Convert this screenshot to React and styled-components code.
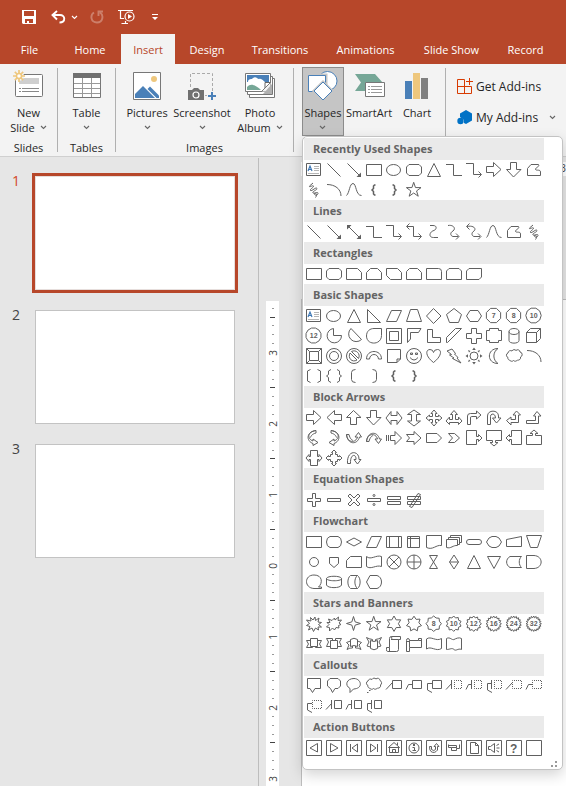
import React from "react";
import styled, { createGlobalStyle, css } from "styled-components";

const brand = "#b7472a";
const ink = "#262626";
const stroke = "#606060";
const blue = "#4a80b8";
const sand = "#eec77d";
const teal = "#76a797";

const GlobalStyle = createGlobalStyle`
  * { box-sizing: border-box; }
  body {
    margin: 0;
    font-family: "Open Sans", "Noto Sans", sans-serif;
    font-size: 12px;
    color: ${ink};
  }
  button { font: inherit; color: inherit; background: none; border: 0; padding: 0; margin: 0; }
  svg { display: block; flex: none; }
`;

/* ---------- page frame ---------- */

const Page = styled.div`
  height: 100vh;
  display: flex;
  flex-direction: column;
  overflow: hidden;
  background: #e6e6e6;
`;

const TitleBar = styled.header`
  flex: none;
  height: 34px;
  padding: 0 20px;
  display: flex;
  align-items: center;
  background: ${brand};
  color: #fff;
`;

const QuickButton = styled.button`
  width: ${(p) => p.$width}px;
  height: 34px;
  display: flex;
  align-items: center;
  justify-content: center;
  margin-right: ${(p) => p.$gap || 0}px;
  opacity: ${(p) => (p.disabled ? 0.3 : 1)};
  color: #fff;
`;

const TabBar = styled.nav`
  flex: none;
  height: 30px;
  display: flex;
  background: ${brand};
`;

const Tab = styled.button`
  flex: none;
  width: ${(p) => p.$width}px;
  height: 30px;
  white-space: nowrap;
  text-align: center;
  font-size: 11px;
  color: #fff;
  ${(p) =>
    p.$active &&
    css`
      background: #f3f3f3;
      color: ${brand};
    `}
`;

/* ---------- ribbon ---------- */

const Ribbon = styled.div`
  flex: none;
  height: 93px;
  display: flex;
  background: #f3f3f3;
  border-bottom: 1px solid #d0d0d0;
  z-index: 2;
`;

const Group = styled.section`
  flex: none;
  width: ${(p) => p.$width}px;
  padding-top: 3px;
  display: flex;
  flex-direction: column;
`;

const GroupButtons = styled.div`
  display: flex;
  justify-content: ${(p) => p.$align || "center"};
  padding-left: ${(p) => p.$indent || 0}px;
  height: 69px;
`;

const GroupName = styled.div`
  margin-top: 4px;
  line-height: 15px;
  font-size: 11px;
  text-align: center;
`;

const Separator = styled.div`
  flex: none;
  width: 1px;
  margin: 4px 0;
  background: #b0b0b0;
`;

const BigButton = styled.button`
  flex: none;
  width: ${(p) => p.$width}px;
  height: 69px;
  padding-top: 2px;
  border: 1px solid transparent;
  display: flex;
  flex-direction: column;
  align-items: center;
  gap: 3px;
  ${(p) =>
    p.$open &&
    css`
      background: #c5c5c5;
      border-color: #8c8c8c;
    `}
`;

const BigLabel = styled.span`
  display: flex;
  flex-direction: column;
  align-items: center;
  line-height: 15px;
  font-size: 11px;
  white-space: nowrap;
`;

const LabelLine = styled.span`
  display: flex;
  align-items: center;
  gap: 5px;
  height: 15px;
`;

const MenuAnchor = styled.div`
  position: relative;
`;

const AddIns = styled.section`
  flex: 1;
  min-width: 0;
  padding: 7px 10px;
`;

const AddInButton = styled.button`
  width: 100%;
  height: 31px;
  display: flex;
  align-items: center;
  gap: 3px;
  white-space: nowrap;
  font-size: 12px;
`;

const Push = styled.span`
  margin-left: auto;
`;

/* ---------- shapes menu ---------- */

const ShapesMenu = styled.div`
  position: absolute;
  left: 0;
  top: 100%;
  width: 261px;
  padding: 1px;
  background: #fff;
  border: 1px solid #c3c3c3;
  border-radius: 5px;
  box-shadow: 0 5px 14px rgba(0, 0, 0, 0.17);
  overflow: hidden;
`;

const Category = styled.h2`
  width: 240px;
  height: 22px;
  margin: 0;
  padding-left: 9px;
  background: #eaeaea;
  color: #646464;
  font-size: 11px;
  line-height: 21px;
  font-weight: 700;
`;

const ShapeGrid = styled.div`
  display: grid;
  grid-template-columns: repeat(12, 20px);
  grid-auto-rows: 20px;
`;

const ShapeButton = styled.button`
  width: 20px;
  height: 20px;
`;

const Footer = styled.div`
  height: 10px;
  display: flex;
  justify-content: flex-end;
  align-items: flex-end;
  padding-right: 3px;
`;

/* ---------- workspace ---------- */

const Workspace = styled.main`
  flex: 1;
  min-height: 0;
  display: flex;
`;

const SlideList = styled.ol`
  flex: none;
  width: 259px;
  margin: 1px 0 0;
  padding: 18px 23px 0 12px;
  list-style: none;
  border-right: 1px solid #bdbdbd;
  display: flex;
  flex-direction: column;
  gap: 20px;
`;

const SlideItem = styled.li`
  display: flex;
  align-items: flex-start;
  color: ${(p) => (p.$selected ? "#d24726" : "#444")};
`;

const SlideNumber = styled.span`
  width: 23px;
  font-size: 14px;
  line-height: 10px;
`;

const Thumb = styled.button`
  flex: 1;
  height: 114px;
  background: #fff;
  border: 1px solid ${(p) => (p.$selected ? "#e6dedc" : "#c3c3c3")};
  box-shadow: ${(p) => (p.$selected ? `0 0 0 3px ${brand}` : "none")};
`;

const Ruler = styled.div`
  flex: none;
  width: 13px;
  margin: 144px 0 0 7px;
  padding-top: 3px;
  background: #fff;
  overflow: hidden;
`;

const RulerUnit = styled.div`
  height: ${(p) => p.$height}px;
  display: flex;
  flex-direction: column;
`;

const Mark = styled.div`
  flex: 1;
  min-height: 0;
  display: flex;
  align-items: center;
  justify-content: center;
`;

const Tick = styled.i`
  height: 1px;
  width: ${(p) => (p.$major ? 5 : 2)}px;
  background: ${(p) => (p.$major ? "#444" : "#999")};
`;

const RulerDigit = styled.span`
  writing-mode: vertical-rl;
  transform: rotate(180deg);
  font-size: 10px;
  line-height: 12px;
  color: #444;
`;

const Editor = styled.div`
  flex: 1;
  min-width: 0;
  padding: 5px 0 0 22px;
  display: flex;
  flex-direction: column;
`;

const TopRuler = styled.div`
  height: 14px;
  margin-bottom: 123px;
  background: #fff;
  font-size: 10px;
  line-height: 13px;
  text-align: right;
  color: #444;
`;

const Canvas = styled.div`
  flex: 1;
  background: #fff;
  border: solid #bdbdbd;
  border-width: 1px 0 0 1px;
`;

/* ---------- shape drawings, each on a 20 x 20 cell ---------- */

const radial = (n, R, r, cx = 9.7, cy = 9.7, turn = -90) => {
  const count = r ? n * 2 : n;
  const pts = [];
  for (let i = 0; i < count; i++) {
    const rad = r && i % 2 ? r : R;
    const a = ((turn + (i * 360) / count) * Math.PI) / 180;
    pts.push(`${(cx + rad * Math.cos(a)).toFixed(2)} ${(cy + rad * Math.sin(a)).toFixed(2)}`);
  }
  return `M${pts.join("L")}Z`;
};
const circle = (r, cx = 9.5, cy = 9.5) =>
  `M${cx - r} ${cy}a${r} ${r} 0 1 0 ${2 * r} 0a${r} ${r} 0 1 0 ${-2 * r} 0Z`;
const oval = (rx, ry, cx = 9.5, cy = 9.5) =>
  `M${cx - rx} ${cy}a${rx} ${ry} 0 1 0 ${2 * rx} 0a${rx} ${ry} 0 1 0 ${-2 * rx} 0Z`;
const box = "M2.5 2.5H17.5V17.5H2.5Z";

const S = {
  textBox: {
    d: "M2.5 3.5H16.5V15.5H2.5Z",
    soft: "M10 6.5H15M10 8.5H15M10 10.5H15M4 13.5H15",
    accent: "M4 11L6 6L8 11M4.5 9.5H7.5",
  },
  line: { d: "M3.5 3.5L16.5 16.5" },
  arrow: { d: "M3.5 3.5L16.5 16.5", solid: "M17 12.5V17H12.5Z" },
  doubleArrow: { d: "M4 4L16 16", solid: "M17 12.5V17H12.5ZM3 7.5V3H7.5Z" },
  elbow: { d: "M2 4.5H9.5V15.5H18" },
  elbowArrow: { d: "M2 3.5H9.5V14.5H17M14.5 11.5L17.5 14.5L14.5 17.5" },
  elbowDouble: { d: "M3 4.5H9.5V14.5H17M14.5 11.5L17.5 14.5L14.5 17.5M5.5 1.5L2.5 4.5L5.5 7.5" },
  curved: { d: "M6 3.5H9C13.5 3.5 12.5 7.5 10 8.500C5.500 9.500 4 15.5 9.500 15.5H14" },
  curvedArrow: { d: "M4 3.5C10 2.500 12 7 9 9C5 11 7 15 10 14.500H14.500M12 11.5L15 14.5L12 17.5" },
  curvedDouble: { d: "M3 4.5C10 3 12.500 7 10 9C6.500 11 8 15 11 14.500H16M14 11.5L17 14.5L14 17.5M5.5 1.5L2.5 4.5L5.5 7.5" },
  curve: { d: "M2.5 15.5C5.5 13 5.5 3.5 9 3.5S11.5 15.5 17.5 15.5" },
  freeform: { d: "M3.5 15.5V8.5L7 4.5H14.5C16 7 11.5 7 11.5 9.5C12.5 11 16.5 9 16.5 12V15.5Z" },
  scribble: { d: "M9 3L5.500 6C5 8 8.500 5 9.500 6C10 7.500 5.500 9 6.500 10.500C8 11.500 12 6.500 13 8.500C13 10.500 8 11 9 13C10.500 14 14 11 14 13.500C13.500 16 10 15.500 10.500 13.500C11 12 14 14.500 11.500 17.500" },
  rect: { d: "M2.5 4.5H17.5V15.5H2.5Z" },
  ellipse: { d: oval(7, 5.5, 9.5, 10) },
  roundRect: { d: "M5 4.5H15L17.5 7V13L15 15.5H5L2.5 13V7Z" },
  triangle: { d: "M10 3.5L16.5 16.5H3.5Z" },
  rightArrow: { d: "M2.5 6.5H9.5V2.5L17 9.5L9.5 16.5V12.5H2.5Z" },
  leftArrow: { d: "M17.5 6.5H10.5V2.5L3 9.5L10.5 16.5V12.5H17.5Z" },
  downArrow: { d: "M6.5 2.5H12.5V9.5H17L9.5 17L2.5 9.5H6.5Z" },
  upArrow: { d: "M6.5 16.5H12.5V9.5H17L9.5 2.5L2.5 9.5H6.5Z" },
  arc: { d: "M3 4.5C11 4.5 17 9 17 16" },
  leftBrace: { d: "M11.5 5H10.5L9.5 6V8.5L8 10L9.5 11.5V14L10.5 15H11.5", w: 1.5 },
  rightBrace: { d: "M8.5 5H9.5L10.5 6V8.5L12 10L10.5 11.5V14L9.5 15H8.5", w: 1.5 },
  star5: { d: radial(5, 7.7, 3, 9.7, 10) },
  snip1: { d: "M2.5 4.5H13.5L17.5 8.5V15.5H2.5Z" },
  snip2: { d: "M6.5 4.5H13.5L17.5 8.5V15.5H2.5V8.5Z" },
  snipDiag: { d: "M2.5 4.5H13.5L17.5 8.5V15.5H6.5L2.5 11.5Z" },
  snipRound: { d: "M5.5 4.5H13.5L17.5 8.5V15.5H2.5V7.5Z" },
  round1: { d: "M2.5 4.5H14.5Q17.5 4.5 17.5 7.5V15.5H2.5Z" },
  round2: { d: "M5 4.5H15L17.5 7V15.5H2.5V7Z" },
  roundDiag: { d: "M5 4.5H17.5V13L15 15.5H2.5V7Z" },
  rightTriangle: { d: "M3.5 3.5V16.5H16.5Z" },
  parallelogram: { d: "M7.5 4.5H17.5L12.5 15.5H2.5Z" },
  trapezoid: { d: "M6.5 3.5H13.5L17.5 15.5H2.5Z" },
  diamond: { d: "M9.5 2.5L17 10L9.5 17.5L2.5 10Z" },
  pentagon: { d: "M10 2.5L17.5 8.5L14.5 16.5H5.5L2.5 8.5Z" },
  hexagon: { d: "M6 4.5H14L17.5 10L14 15.5H6L2.5 10Z" },
  n7: { d: radial(8, 7.7, 0, 9.5, 9.5, 22.5), t: "7" },
  n8: { d: radial(8, 7.7, 0, 9.5, 9.5, 22.5), t: "8" },
  n10: { d: radial(10, 7.7, 0, 9.5, 9.5, 0), t: "10" },
  n12: { d: radial(12, 7.7, 0, 9.5, 9.5, 15), t: "12" },
  pie: { d: "M9.5 2.5A7.2 7.2 0 1 0 17.5 9.5H9.5Z" },
  chord: { d: "M7 2.5A7.5 7.5 0 1 0 17.5 13.500Z" },
  teardrop: { d: "M17.5 2.5V9.5C17.5 19.5 2.5 19.5 2.5 10C2.5 5 6 2.5 10 2.5Z" },
  frame: { d: "M2.5 2.5H17.5V17.5H2.5ZM5.5 5.5H14.5V14.5H5.5Z" },
  halfFrame: { d: "M3.5 2.5H17L14.5 6.5H6.5V13L3.5 16.5Z" },
  lShape: { d: "M3.5 3.5H8.5V11.5H16.5V16.5H3.5Z" },
  stripe: { d: "M11.5 2.5H17.5L3.500 16.5H2.5V11.5Z" },
  cross: { d: "M7.5 2.5H12.5V7.5H17.5V12.5H12.5V17.5H7.5V12.5H2.5V7.5H7.5Z" },
  plaque: { d: "M5.5 2.5H14.5V4.5H17.5V14.5H14.5V16.5H5.5V14.5H2.5V4.5H5.5Z" },
  can: { d: "M5 5.5V14.5C5 18 15 18 15 14.5V5.5M5 5.5C5 1.5 15 1.5 15 5.5S5 9.5 5 5.5Z" },
  cube: { d: "M2.5 6.5H12.5V16.5H2.5ZM2.5 6.5L6.5 2.5H16.5L12.5 6.5M16.5 2.5V12.5L12.5 16.5" },
  bevel: { d: "M2.5 2.5H17.5V17.5H2.5ZM5.5 5.5H14.5V14.5H5.5ZM2.5 2.5L5.5 5.5M17.5 2.5L14.5 5.5M17.5 17.5L14.5 14.5M2.5 17.5L5.5 14.5" },
  donut: { d: circle(7.5, 10, 10) + circle(4.5, 10, 10) },
  no: { d: circle(7.5, 10, 10) + "M6 7L13 14C8 17 3.5 12 6 7ZM7.5 5.5L14.5 12.5C17 8 12 3 7.5 5.5Z" },
  blockArc: { d: "M2.5 13C2.5 3 17.5 3 17.5 13H14.5C14 7 6 7 5.5 13Z" },
  folded: { d: "M3.5 3.5H16.5V13L13 16.5H3.5ZM16.5 13H13V16.5" },
  smiley: { d: circle(7.5, 10, 10) + "M6 11.5Q10 16.5 14 11.5M6.5 7H8.5V8.5H6.5ZM11.5 7H13.5V8.5H11.5Z" },
  heart: { d: "M9.5 16.5C1 10 1.5 3.5 6 3.5Q9 3.5 9.5 6.5Q10 3.5 13.5 3.5C18 3.5 18 10 9.5 16.5Z" },
  lightning: { d: "M8 3L11.5 7.5L10.5 8L14 11.5L13 12L17 17L8.5 12.5L10 12L5.5 9L7.5 8.5L3 5Z" },
  sun: { d: circle(4, 10, 10), solid: "M10 1.5L11.8 4H8.2ZM10 18.5L8.2 16H11.8ZM1.5 10L4 8.2V11.8ZM18.5 10L16 11.8V8.2ZM4 4L6.5 5L5 6.5ZM16 4L15 6.5L13.5 5ZM4 16L5 13.5L6.5 15ZM16 16L13.5 15L15 13.5Z" },
  moon: { d: "M14 2.5C2.5 2.5 2.5 17.5 14 17.5C8.5 14 8.5 6 14 2.5Z" },
  cloud: { d: "M4 11.500A2.400 2.400 0 0 1 4 7A2.600 2.600 0 0 1 8 5A2.400 2.400 0 0 1 12 4.500A2.300 2.300 0 0 1 16 6A2.600 2.600 0 0 1 16.500 11A2.400 2.400 0 0 1 13.500 14A2.600 2.600 0 0 1 9.500 14.500A2.500 2.500 0 0 1 5.500 14A1.800 1.800 0 0 1 4 11.500Z" },
  brackets: { d: "M6.5 3.5L3.5 5V15L6.5 16.5M13.5 3.5L16.5 5V15L13.5 16.5" },
  braces: { d: "M7 3.5L4.5 5V8.5L2.5 10L4.5 11.5V15L7 16.5M13 3.5L15.5 5V8.5L17.5 10L15.5 11.5V15L13 16.5" },
  leftBracket: { d: "M11.5 3.5Q7.5 3.5 7.5 6.5V13.5Q7.5 16.5 11.5 16.5" },
  rightBracket: { d: "M8.5 3.5Q12.5 3.5 12.5 6.5V13.5Q12.5 16.5 8.5 16.5" },
  leftRight: { d: "M2 10L7 3.5V7.5H13V3.5L18 10L13 16.5V12.5H7V16.5Z" },
  upDown: { d: "M10 2L16.5 6.5H12.5V13H16.5L10 18L3.5 13H7.5V6.5H3.5Z" },
  quad: { d: "M10 2L13 5.5H11.5V8.5H14.5V7L18 10L14.5 13V11.5H11.5V14.5H13L10 18L7 14.5H8.5V11.5H5.5V13L2 10L5.5 7V8.5H8.5V5.5H7Z" },
  leftRightUp: { d: "M10 2.5L13.5 6.5H11.500V11.5H14.5V9L18 13L14.5 16.5V14.5H5.5V16.5L2 13L5.5 9V11.5H8.500V6.5H6.5Z" },
  bent: { d: "M3.5 16.5V8Q3.5 5.5 6.5 5.5H12.5V3L17 7L12.5 11V8.5H7.5Q6.5 8.5 6.5 10V16.5Z" },
  uTurn: { d: "M3.5 16.5V8C3.5 1.5 14.5 1.5 14.5 8V10H17L12.5 15L8.5 10H11.5C11.5 5 6.5 5 6.5 8.5V16.5Z" },
  leftUp: { d: "M12.5 3L16.5 7H14.5V14.5H7V17L2.5 12.5L7 9V11.5H11.5V7H9Z" },
  bentUp: { d: "M13 3.5L17 8H14.500V15.5H2.5V12.5H11.5V8H9.5Z" },
  curvedRight: { d: "M12 2.5C3 3.5 3 11 9 13V11L14 14.5L9 17.5V15.5C2 13 2 4 12 2.5ZM12 2.5V5C8 6 7 8 6.5 9.5" },
  curvedLeft: { d: "M7 2.5C16 3.5 16 11 10 13V11L5 14.5L10 17.5V15.5C17 13 17 4 7 2.5ZM7 2.5V5C11 6 12 8 12.5 9.5" },
  curvedUp: { d: "M2.5 6.5C3.5 15.5 12 15 13.5 9H11L14.5 4.5L17.5 9H15.5C13.5 17 3.5 17 2.5 6.5ZM2.5 6.5H5C6 11 8 12 9 12.5" },
  curvedDown: { d: "M2.5 13.5C3.5 4.5 12 5 13.5 11H11L14.5 15.5L17.5 11H15.5C13.5 3 3.5 3 2.5 13.5ZM2.5 13.5H5C6 9 8 8 9 7.5" },
  striped: { d: "M2.5 7V13M4.5 7V13M6.5 7.5H11V3.5L17.5 10L11 16.5V12.5H6.5Z" },
  notched: { d: "M2.5 6.5H10V3.5L17 10L10 16.5V13.5H2.5L5.5 10Z" },
  homePlate: { d: "M2.5 5.5H13L17.5 10L13 14.5H2.5Z" },
  chevron: { d: "M4.5 5.5H10.5L15.5 10L10.5 14.5H4.5L8.5 10Z" },
  rightCallout: { d: "M2.5 2.5H12.5V8.5H14.5V6.5L18 10L14.5 13.5V11.5H12.5V16.5H2.5Z" },
  downCallout: { d: "M2.5 2.5H17.5V12.5H11.500V14.5H14L10 18L6 14.5H8.500V12.5H2.5Z" },
  leftCallout: { d: "M17.5 2.5H7.5V8.5H5.5V6.5L2 10L5.5 13.5V11.5H7.5V16.5H17.5Z" },
  upCallout: { d: "M2.5 16.5H17.5V7.5H11.500V5.5H14L10 2L6 5.5H8.500V7.5H2.5Z" },
  leftRightCallout: { d: "M6.5 2.5H13.5V8.5H15V6.5L18 10L15 13.5V11.5H13.5V17.5H6.5V11.5H5V13.5L2 10L5 6.5V8.5H6.5Z" },
  quadCallout: { d: "M10 2L12.5 4.5H11.5V6.5H13.5V8.5H15.5V7.5L18 10L15.5 12.5V11.5H13.5V13.5H11.5V15.5H12.5L10 18L7.5 15.5H8.5V13.5H6.5V11.5H4.5V12.5L2 10L4.5 7.5V8.5H6.5V6.5H8.5V4.5H7.5Z" },
  circular: { d: "M3.5 15.5C2.5 1.5 15.5 2 15 11.5H17L13.5 16L10 11.5H12C12.5 5.5 6 5.5 6.5 15.5Z" },
  plus: { d: "M8.5 3.5H11.5V8.5H16.5V11.5H11.5V16.5H8.5V11.5H3.5V8.5H8.5Z" },
  minus: { d: "M3.5 8.5H16.5V11.5H3.5Z" },
  times: { d: "M6 4L10 8L14 4L16 6L12 10L16 14L14 16L10 12L6 16L4 14L8 10L4 6Z" },
  divide: { d: "M3.5 8.5H16.5V11.5H3.5Z" + circle(1, 10, 5.5) + circle(1, 10, 14.5) },
  equal: { d: "M3.5 6.5H16.5V9.5H3.5ZM3.5 11.5H16.5V14.5H3.5Z" },
  notEqual: { d: "M3.5 6.5H16.5V9.5H3.5ZM3.5 11.5H16.5V14.5H3.5ZM5.500 16.5L14 3.5L16.5 4.500L8 17.5Z" },
  altProcess: { d: "M6 4.5H14Q17.5 5.5 17.5 10T14 15.5H6Q2.5 14.5 2.5 10T6 4.5Z" },
  decision: { d: "M10 6L17.5 10L10 14L2.5 10Z" },
  predefined: { d: "M2.5 4.5H17.5V15.5H2.5ZM5.5 4.5V15.5M14.5 4.5V15.5" },
  internal: { d: "M3.5 4.5H15.5V15.5H3.5ZM6.5 4.5V15.5M3.5 6.5H15.5" },
  document: { d: "M2.5 3.5H17.5V13.5C12 12.5 9 18.5 2.5 15.5Z" },
  multiDoc: { d: "M2.5 7.5H13.5V13.5C9 13 7 17 2.5 15.5ZM4.5 7.5V5.5H15.5V12.5H13.5M6.5 5.5V3.5H17.5V10.5H15.5" },
  terminator: { d: "M5 7.5H15Q17.5 7.5 17.5 10T15 12.5H5Q2.5 12.5 2.5 10T5 7.5Z" },
  preparation: { d: "M5 6L8 4.5H12L15 6L17.5 10L15 14L12 15.5H8L5 14L2.5 10Z" },
  manualInput: { d: "M2.5 7.5L17.5 4.5V14.5H2.5Z" },
  manualOp: { d: "M2.5 3.5H17.5L13.5 15.5H6.5Z" },
  connector: { d: circle(4.5, 10, 10) },
  offPage: { d: "M5.5 5.5H14.5V11.5L10 15.5L5.5 11.5Z" },
  card: { d: "M6.5 4.5H17.5V15.5H2.5V8.5Z" },
  tape: { d: "M2.500 4.500C7 8.500 12 2.500 17.500 4.500V14.500C12 12.500 7 18 2.500 14.500Z" },
  summing: { d: circle(7, 10, 10) + "M5 5L15 15M15 5L5 15" },
  or: { d: circle(7, 10, 10) + "M3 10H17M10 3V17" },
  collate: { d: "M5.5 3.5H13.5L5.5 16.5H13.5Z" },
  sort: { d: "M10 3L14.5 10L10 17L5.5 10ZM5.5 10H14.5" },
  extract: { d: "M10 3.5L16.5 16.5H3.5Z" },
  merge: { d: "M3.5 4.5H16.5L10 16.5Z" },
  stored: { d: "M6 4.5H17.5C14.5 7 14.5 13 17.5 15.5H6C1.5 13 1.5 7 6 4.5Z" },
  delay: { d: "M2.5 3.5H10C19.5 4 19.5 16 10 16.5H2.5Z" },
  sequential: { d: "M14.5 15H17.5V16.5H10C0 16 0 3 10 3C18.5 3 19 11 14.5 15" },
  disk: { d: "M2.5 6.5V13C3.5 16.5 16.5 16.5 17.5 13V6.5M2.5 6.5C3 3.5 17 3.5 17.5 6.5S3 9.5 2.5 6.5Z" },
  directAccess: { d: "M6.5 3.5H13.5C17 6 17 14 13.5 16.5H6.5C3 14 3 6 6.5 3.5ZM13.5 3.5C10 6 10 14 13.5 16.5" },
  display: { d: "M6 3.5H13C19 5 19 15 13 16.5H6L2.5 10Z" },
  explosion1: { d: "M9 6L11 3L11.5 6.5L15 4L14 8L17.5 8.5L14.5 10.5L17.5 13L14 13L14.5 16L11.5 14L9.5 17.5L8 14L4.5 16L6 12.5L2.5 11.5L5.5 9.5L2.5 6L7 7L6.5 3.5Z" },
  explosion2: { d: "M8 6.5L10.5 4L11 6L14.5 3L14 6.5L17.5 6L15 9L17 10.5L14.5 11.5L15 14L12 13.5L10.5 16L8.5 14L5.5 17L5.5 13.5L2.5 13L5 10.5L3 8.5L6 8.5L4.5 5Z" },
  star4: { d: radial(4, 7, 2.3, 9.5, 9.5) },
  star6: { d: radial(6, 7.7, 4.4, 10, 9.7) },
  star7: { d: radial(7, 7.7, 5, 10, 9.9) },
  s8: { d: radial(8, 7.7, 6.2), t: "8" },
  s10: { d: radial(10, 7.7, 6), t: "10" },
  s12: { d: radial(12, 7.7, 6), t: "12" },
  s16: { d: radial(16, 7.7, 6), t: "16" },
  s24: { d: radial(18, 7.7, 6), t: "24" },
  s32: { d: radial(20, 7.7, 6), t: "32" },
  ribbonUp: { d: "M6.5 4.5H13.5V12.5H6.5ZM6.5 6.5H2.5L4.5 10L2.5 13.5H8.5V12.5M13.5 6.5H17.5L15.5 10L17.5 13.5H11.5V12.5" },
  ribbonDown: { d: "M6.5 6.5H13.5V14.5H6.5ZM8.5 6.5V4.5H2.5L4.5 8L2.5 12.5H6.5M11.5 6.5V4.5H17.5L15.5 8L17.5 12.5H13.5" },
  curvedRibbonUp: { d: "M6.5 12.5V5.5Q10 3 13.5 5.5V12.5Q10 10.5 6.5 12.5ZM6.5 7L2.5 8.5L5 11L3 15.5Q6 13.5 8.5 14V12M13.5 7L17.5 8.5L15 11L17 15.5Q14 13.5 11.5 14V12" },
  curvedRibbonDown: { d: "M6.5 6.5Q10 8.5 13.5 6.5V14.5Q10 17 6.5 14.5ZM8.5 7V5.5Q5 5 2.5 3.5L5 8L3 12L6.5 13M11.5 7V5.5Q15 5 17.5 3.5L15 8L17 12L13.5 13" },
  scrollV: { d: "M5.5 13.5V4.5Q5.5 2.5 7.5 2.5H16.5V5.5H14.5V15.5Q14.5 17.5 12.5 17.5H3.5Q2.5 17.5 2.5 15.5V13.5H5.5V17M7.5 2.5Q8.5 5.5 7 5.5H14.5" },
  scrollH: { d: "M5.5 6.5H14.5V4.5H17.5V13.5H5.5V17.5H2.5V6.5Q2.5 4.5 4 4.5Q5.5 4.5 5.5 6.5V13.5M14.5 6.5H17.5M2.5 7.5H5.5" },
  wave: { d: "M2.5 5C7 1.5 12 8 17.5 4.5V14.5C12 18 7 11.5 2.5 15Z" },
  doubleWave: { d: "M2.5 4.5C6 2.5 8 6.5 10 5.5S15 3 17.5 4.5V15.5C14 14 12 17.5 10 15.5S6 15.5 2.5 15.5Z" },
  rectCallout: { d: "M3.5 2.5H16.5V12.5H11L8.5 16.5L6 12.5H3.5Z" },
  roundCallout: { d: "M6 2.5H14L16.5 5V10L14 12.5H11L8.5 16.5L6.5 12.5L3.5 10V5Z" },
  ovalCallout: { d: "M6 12.500C0 9 3 2.5 10 2.5S20 12.5 9.500 13L6 16.5Z" },
  cloudCallout: { d: "M4 9.500A2.400 2.400 0 0 1 4 5A2.600 2.600 0 0 1 8 3.500A2.400 2.400 0 0 1 12 3A2.300 2.300 0 0 1 16 4.500A2.600 2.600 0 0 1 16.500 9A2.400 2.400 0 0 1 13.500 12A2.600 2.600 0 0 1 9.500 12.500A2.500 2.500 0 0 1 5.500 12A1.800 1.800 0 0 1 4 9.500ZM5 14.500H6.500M3 16.500H4.500" },
};

const callBox = "M8.5 4.5H17.5V12.5H8.5Z";
const narrowBox = "M10.5 4.5H17.5V12.5H10.5Z";
const leg1 = "M2 13.5L8 7";
const leg2 = "M2 13.5L4.5 8.5H8";
const leg3 = "M8 7.5H3.5V14L8 16.5";
const bar = "M7.5 4V13";
const lineCallouts = [
  { d: callBox + leg1 },
  { d: callBox + leg2 },
  { d: callBox + leg3 },
  { d: leg1 + bar, dots: narrowBox },
  { d: leg2 + bar, dots: narrowBox },
  { d: leg3 + bar, dots: narrowBox },
  { d: leg1, dots: callBox },
  { d: leg2, dots: callBox },
  { d: leg3, dots: callBox },
  { d: narrowBox + leg1 + bar },
  { d: narrowBox + leg2 + bar },
  { d: narrowBox + leg3 + bar },
];

const actions = [
  { d: box + "M13.5 5.5V14L6 10Z" },
  { d: box + "M6.5 5.5V14L14 10Z" },
  { d: box + "M13.5 6V14L8 10ZM6.5 6V14" },
  { d: box + "M6.5 6V14L12 10ZM13.5 6V14" },
  { d: box + "M5.5 9.5V14.5H14.5V9.5M4.5 9.5H15.5L10 4.5ZM13.5 7V4.5M8.5 14.5V11.5H11.5V14.5" },
  { d: box + circle(5, 10, 10) + "M8.500 9.500H10.500V12.500M8.500 12.500H12", solid: "M9 6H11V8H9Z" },
  { d: box + "M5.5 8.5H7.5V11.5Q10 13.5 11.5 11.5V8.5H10L12.5 5.5L15 8.5H13.5V12Q10.5 16 7 13.5Q5.5 12.5 5.5 8.5Z" },
  { d: box + "M4.5 6.500V9.5H7.5V12.5H12.5V10.5H15.5V6.500M12.5 10.500V7.500H4.500M7.500 9.500H12.5", },
  { d: box + "M6.5 4.5H11.5L14.5 7.5V15.5H6.5ZM11.5 4.5V7.5H14.5" },
  { d: box + "M4.5 8.5H6.5L10.5 5.5V14.5L6.5 11.5H4.5ZM12.5 7.5L15 6M12.5 10H15.5M12.5 12.5L15 14" },
  { d: box, t: "?", big: true },
  { d: box },
];

const pick = (names) => names.split(" ").map((n) => S[n]);

const categories = [
  ["Recently Used Shapes", pick("textBox line arrow rect ellipse roundRect triangle elbow elbowArrow rightArrow downArrow freeform scribble arc curve leftBrace rightBrace star5")],
  ["Lines", pick("line arrow doubleArrow elbow elbowArrow elbowDouble curved curvedArrow curvedDouble curve freeform scribble")],
  ["Rectangles", pick("rect roundRect snip1 snip2 snipDiag snipRound round1 round2 roundDiag")],
  ["Basic Shapes", pick("textBox ellipse triangle rightTriangle parallelogram trapezoid diamond pentagon hexagon n7 n8 n10 n12 pie chord teardrop frame halfFrame lShape stripe cross plaque can cube bevel donut no blockArc folded smiley heart lightning sun moon cloud arc brackets braces leftBracket rightBracket leftBrace rightBrace")],
  ["Block Arrows", pick("rightArrow leftArrow upArrow downArrow leftRight upDown quad leftRightUp bent uTurn leftUp bentUp curvedRight curvedLeft curvedUp curvedDown striped notched homePlate chevron rightCallout downCallout leftCallout upCallout leftRightCallout quadCallout circular")],
  ["Equation Shapes", pick("plus minus times divide equal notEqual")],
  ["Flowchart", pick("rect altProcess decision parallelogram predefined internal document multiDoc terminator preparation manualInput manualOp connector offPage card tape summing or collate sort extract merge stored delay sequential disk directAccess display")],
  ["Stars and Banners", pick("explosion1 explosion2 star4 star5 star6 star7 s8 s10 s12 s16 s24 s32 ribbonUp ribbonDown curvedRibbonUp curvedRibbonDown scrollV scrollH wave doubleWave")],
  ["Callouts", [...pick("rectCallout roundCallout ovalCallout cloudCallout"), ...lineCallouts]],
  ["Action Buttons", actions],
];

const ShapeGlyph = ({ shape }) => (
  <svg width="20" height="20" viewBox="0 0 20 20" fill="none" stroke={stroke} strokeWidth={shape.w || 1} aria-hidden="true">
    <path d={shape.d} />
    {shape.soft && <path d={shape.soft} stroke="#b5b5b5" />}
    {shape.accent && <path d={shape.accent} stroke="#3f78b5" strokeWidth="1.2" />}
    {shape.dots && <path d={shape.dots} strokeDasharray="1 1" strokeDashoffset="0.5" />}
    {shape.solid && <path d={shape.solid} fill={stroke} stroke="none" />}
    {shape.t && (
      <text
        x="9.7"
        y={shape.big ? 14.5 : 12.3}
        textAnchor="middle"
        fontFamily="Liberation Sans, sans-serif"
        fontWeight="700"
        fontSize={shape.big ? 12 : 7}
        fill={stroke}
        stroke="none"
      >
        {shape.t}
      </text>
    )}
  </svg>
);

/* ---------- toolbar icons ---------- */

const Chevron = ({ color = "#666" }) => (
  <svg width="7" height="5" viewBox="0 0 7 5" fill="none" stroke={color} strokeWidth="1.1">
    <path d="M1 1L3.5 3.5L6 1" />
  </svg>
);

const SaveIcon = () => (
  <svg width="14" height="14" viewBox="0 0 14 14">
    <path fill="#fff" fillRule="evenodd" d="M0 0H14V14H1L0 13ZM2 1V6H12V1ZM3 9V13H5V11H7V13H11V9Z" />
  </svg>
);

const UndoIcon = () => (
  <svg width="15" height="14" viewBox="0 0 15 14" fill="none" stroke="#fff" strokeWidth="1.9">
    <path d="M6 1L1.500 5L6 9.500M1.500 5H9C14.500 5 15 12.500 8.500 12.500" />
  </svg>
);

const RedoIcon = () => (
  <svg width="14" height="14" viewBox="0 0 14 14" fill="none" stroke="#fff" strokeWidth="1.9">
    <path d="M4 2.500C0 5 0.500 12.500 7 12.500C13 12.500 14 5 10 2.500M8.500 6V1.500H13" />
  </svg>
);

const PresentIcon = () => (
  <svg width="17" height="16" viewBox="0 0 17 16" fill="none" stroke="#fff" strokeWidth="1.2">
    <path d="M0 1.500H15M2.500 1.500V9.500H6M7.500 12V14.500M3.500 14.500H10" />
    <circle cx="11.500" cy="7.500" r="4.500" />
    <path d="M10 5L14 7.500L10 10Z" fill="#fff" stroke="none" />
  </svg>
);

const CustomizeIcon = () => (
  <svg width="6" height="7" viewBox="0 0 6 7" fill="#fff">
    <path d="M0 0H6V1H0ZM0 3H6L3 6Z" />
  </svg>
);

const Big = ({ children }) => (
  <svg width="32" height="32" viewBox="0 0 32 32" fill="none" aria-hidden="true">
    {children}
  </svg>
);

const NewSlideIcon = () => (
  <Big>
    <rect x="2.5" y="4.5" width="27" height="22" rx="1" fill="#fff" stroke="#777" />
    <path d="M10 8H26V14H6V11Z" fill="#cfcfcf" />
    <path d="M6 18.5H8M9 18.5H26M6 21.5H8M9 21.5H26" stroke="#888" />
    <circle cx="6" cy="6" r="5" fill="#f3f3f3" />
    <circle cx="6" cy="6" r="2.5" fill="#fff" stroke={sand} strokeWidth="1.5" />
    <path d="M6 0V3M6 9V12M0 6H3M9 6H12M1.8 1.8L4 4M8 8L10.2 10.2M10.2 1.8L8 4M4 8L1.8 10.2" stroke={sand} strokeWidth="1.7" />
  </Big>
);

const TableIcon = () => (
  <Big>
    <path d="M2.5 3.5H29.5V27.5H2.5Z" fill="#fff" />
    <path d="M11.5 8V27M20.5 8V27M3 13.5H29M3 18.5H29M3 23.5H29" stroke="#999" />
    <path d="M2.5 3.5H29.5V27.5H2.5Z" stroke="#777" />
    <path d="M2 3H30V8H2Z" fill="#707070" />
  </Big>
);

const PictureIcon = () => (
  <Big>
    <path d="M2.5 2.5H29.5V29.5H2.5Z" fill="#fff" stroke="#777" />
    <circle cx="23" cy="9" r="3" fill={sand} />
    <path d="M4 28V24L12 16L24 28Z" fill={blue} />
    <path d="M16.5 19L19 16.5L28 25.5V28H25.5Z" fill={blue} />
  </Big>
);

const ScreenshotIcon = () => (
  <Big>
    <path d="M4.5 17V3.5H26.5V21" stroke="#aaa" strokeDasharray="3 2" />
    <path d="M2 20H6L8 18H12L14 20H18V30H2Z" fill="#707070" />
    <circle cx="10" cy="25" r="3" stroke="#fff" strokeWidth="1.2" />
    <path d="M26 22V30M22 26H30" stroke={blue} strokeWidth="2" />
    <path d="M19 25.5H21" stroke="#aaa" />
  </Big>
);

const AlbumIcon = () => (
  <Big>
    <path d="M5.5 8.5H30.5V27.5H5.5Z" fill="#fff" stroke="#777" />
    <path d="M3.5 6.5H28.5V24.5H3.5Z" fill="#fff" stroke="#777" />
    <path d="M1.5 3.5H26.5V21.5H1.5Z" fill="#fff" stroke="#777" />
    <path d="M3 5H25V12H3Z" fill={blue} />
    <path d="M4 12C4 8 8 10 9 8C12 6 13 9 15 9C18 8 19 11 21 12V14H4Z" fill="#fff" />
    <path d="M3 20V17C7 13 11 15 17 20Z" fill={teal} />
    <path d="M26.5 12.5L18 21.5H26.5Z" fill="#f3f3f3" />
    <path d="M26.5 12.5H21V18L17.5 21.5" fill="#fff" stroke="#666" />
    <path d="M26.5 12.5L17.5 21.5" stroke="#777" />
    <path d="M28 14V24H19Z" fill="#b0b0b0" />
  </Big>
);

const ShapesIcon = () => (
  <Big>
    <circle cx="20.5" cy="11" r="9.5" fill="#fff" stroke={blue} />
    <path d="M1.5 5.5H18.5V21.5H1.5Z" stroke="#c5c5c5" strokeWidth="4" />
    <path d="M1.5 5.5H18.5V21.5H1.5Z" fill="#fff" stroke={blue} />
    <path d="M16 12L25 21L16 30L7 21Z" stroke="#c5c5c5" strokeWidth="3" />
    <path d="M16 12L25 21L16 30L7 21Z" fill="#fff" stroke={blue} />
  </Big>
);

const SmartArtIcon = () => (
  <Big>
    <path d="M2 4H22L30 13H12V21H2L8 12.5Z" fill={teal} />
    <path d="M12.5 12.5H31.5V26.5H12.5Z" fill="#fff" stroke="#777" />
    <path d="M15 16.5H17M18 16.5H29M15 19.5H17M18 19.5H29M15 22.5H17M18 22.5H29" stroke="#999" />
  </Big>
);

const ChartIcon = () => (
  <Big>
    <path d="M4 11H11V29H4Z" fill={blue} />
    <path d="M12 3H19V29H12Z" fill={sand} />
    <path d="M20 8H27V29H20Z" fill="#808080" />
  </Big>
);

const GetAddInsIcon = () => (
  <svg width="17" height="17" viewBox="0 0 17 17" fill="none" stroke="#d83b01">
    <path d="M8.5 1.5H1.5V15.5H15.5V8.5H1.5M8.5 1.5V15.5M13.5 0V7M10 3.5H17" />
  </svg>
);

const MyAddInsIcon = () => (
  <svg width="17" height="17" viewBox="0 0 17 17" fill="#0072c6">
    <path d="M10 1L16 4.5V11.5L10 15L8 14V11L4 8V4.5Z" />
    <circle cx="4.5" cy="12" r="3.2" />
  </svg>
);

/* ---------- content ---------- */

const tabs = [
  ["File", 59],
  ["Home", 62],
  ["Insert", 54],
  ["Design", 64],
  ["Transitions", 82],
  ["Animations", 89],
  ["Slide Show", 83],
  ["Record", 65],
];

const ToolButton = ({ icon, lines, width, arrow, open }) => (
  <BigButton $width={width} $open={open} aria-expanded={open}>
    {icon}
    <BigLabel>
      {lines.map((text, i) => (
        <LabelLine key={text}>
          {text}
          {arrow && i === 1 && <Chevron />}
        </LabelLine>
      ))}
      {arrow && lines.length === 1 && (
        <LabelLine>
          <Chevron />
        </LabelLine>
      )}
    </BigLabel>
  </BigButton>
);

const rulerNumbers = [3, 2, 1, 0, 1, 2, 3];

export default function App() {
  return (
    <Page>
      <GlobalStyle />
      <TitleBar>
        <QuickButton $width={18} $gap={12} aria-label="Save"><SaveIcon /></QuickButton>
        <QuickButton $width={16} $gap={4} aria-label="Undo"><UndoIcon /></QuickButton>
        <QuickButton $width={9} $gap={10} aria-label="Undo history"><Chevron color="#fff" /></QuickButton>
        <QuickButton $width={16} $gap={12} aria-label="Redo" disabled><RedoIcon /></QuickButton>
        <QuickButton $width={19} $gap={13} aria-label="Start slide show"><PresentIcon /></QuickButton>
        <QuickButton $width={12} aria-label="Customize toolbar"><CustomizeIcon /></QuickButton>
      </TitleBar>
      <TabBar>
        {tabs.map(([name, width]) => (
          <Tab key={name} $width={width} $active={name === "Insert"}>{name}</Tab>
        ))}
      </TabBar>

      <Ribbon>
        <Group $width={57}>
          <GroupButtons>
            <ToolButton icon={<NewSlideIcon />} lines={["New", "Slide"]} width={48} arrow />
          </GroupButtons>
          <GroupName>Slides</GroupName>
        </Group>
        <Separator />
        <Group $width={57}>
          <GroupButtons>
            <ToolButton icon={<TableIcon />} lines={["Table"]} width={44} arrow />
          </GroupButtons>
          <GroupName>Tables</GroupName>
        </Group>
        <Separator />
        <Group $width={177}>
          <GroupButtons $align="flex-start" $indent={6}>
            <ToolButton icon={<PictureIcon />} lines={["Pictures"]} width={50} arrow />
            <ToolButton icon={<ScreenshotIcon />} lines={["Screenshot"]} width={60} arrow />
            <ToolButton icon={<AlbumIcon />} lines={["Photo", "Album"]} width={56} arrow />
          </GroupButtons>
          <GroupName>Images</GroupName>
        </Group>
        <Separator />
        <Group $width={151}>
          <GroupButtons $align="flex-start" $indent={8}>
            <MenuAnchor>
              <ToolButton icon={<ShapesIcon />} lines={["Shapes"]} width={42} arrow open />
              <ShapesMenu>
                {categories.map(([title, shapes]) => (
                  <React.Fragment key={title}>
                    <Category>{title}</Category>
                    <ShapeGrid>
                      {shapes.map((shape, i) => (
                        <ShapeButton key={i} aria-label={`${title} ${i + 1}`}>
                          <ShapeGlyph shape={shape} />
                        </ShapeButton>
                      ))}
                    </ShapeGrid>
                  </React.Fragment>
                ))}
                <Footer>
                  <svg width="7" height="7" viewBox="0 0 7 7" fill="#999">
                    <path d="M4 0H6V2H4ZM4 4H6V6H4ZM0 4H2V6H0Z" />
                  </svg>
                </Footer>
              </ShapesMenu>
            </MenuAnchor>
            <ToolButton icon={<SmartArtIcon />} lines={["SmartArt"]} width={50} />
            <ToolButton icon={<ChartIcon />} lines={["Chart"]} width={46} />
          </GroupButtons>
        </Group>
        <Separator />
        <AddIns>
          <AddInButton><GetAddInsIcon />Get Add-ins</AddInButton>
          <AddInButton><MyAddInsIcon />My Add-ins<Push><Chevron /></Push></AddInButton>
        </AddIns>
      </Ribbon>

      <Workspace>
        <SlideList>
          {[1, 2, 3].map((n) => (
            <SlideItem key={n} $selected={n === 1}>
              <SlideNumber>{n}</SlideNumber>
              <Thumb $selected={n === 1} aria-label={`Slide ${n}`} />
            </SlideItem>
          ))}
        </SlideList>
        <Ruler>
          <RulerUnit $height={44}>
            {[0, 1, 2, 3, 4].map((i) => (
              <Mark key={i}><Tick $major={i === 1} /></Mark>
            ))}
          </RulerUnit>
          {rulerNumbers.map((n, u) => (
            <RulerUnit key={u} $height={71}>
              <Mark><RulerDigit>{n}</RulerDigit></Mark>
              {[1, 2, 3, 4, 5, 6, 7].map((i) => (
                <Mark key={i}><Tick $major={i === 4} /></Mark>
              ))}
            </RulerUnit>
          ))}
        </Ruler>
        <Editor>
          <TopRuler>3</TopRuler>
          <Canvas />
        </Editor>
      </Workspace>
    </Page>
  );
}
